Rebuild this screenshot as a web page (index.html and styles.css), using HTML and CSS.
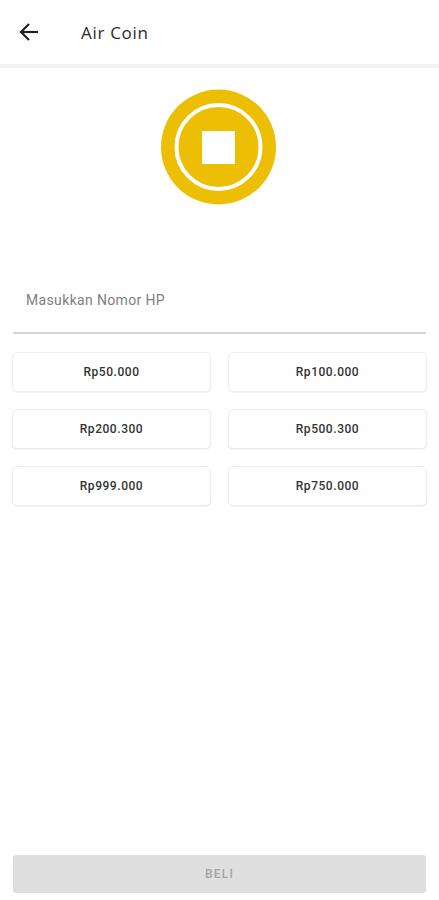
FILE: index.html
```html
<!DOCTYPE html>
<html lang="en">
<head>
  <meta charset="UTF-8">
  <title>Air Coin</title>
  <link rel="stylesheet" href="styles.css">
</head>
<body>
  <div class="header">
    <svg class="back" width="20" height="20" viewBox="0 0 20 20" fill="none" stroke="#222" stroke-width="2.2">
      <path d="M19 10H2"/>
      <path d="M10 2L2 10l8 8"/>
    </svg>
    <h1>Air Coin</h1>
  </div>

  <div class="logo">
    <svg width="115" height="116" viewBox="0 0 115 116">
      <circle cx="57.5" cy="58" r="57.5" fill="#ecbf04"/>
      <circle cx="57.5" cy="58" r="42" fill="none" stroke="#fff" stroke-width="4"/>
      <rect x="41" y="42" width="33" height="33" fill="#fff"/>
    </svg>
  </div>

  <div class="phone-field">Masukkan Nomor HP</div>

  <div class="amounts">
    <button>Rp50.000</button>
    <button>Rp100.000</button>
    <button>Rp200.300</button>
    <button>Rp500.300</button>
    <button>Rp999.000</button>
    <button>Rp750.000</button>
  </div>

  <button class="buy">BELI</button>
</body>
</html>
```

FILE: styles.css
```css
html, body {
  height: 100%;
}

body {
  margin: 0;
  box-sizing: border-box;
  height: 900px;
  padding-bottom: 7px;
  display: flex;
  flex-direction: column;
  background-color: #fff;
  font-family: Roboto, sans-serif;
  overflow: hidden;
}

.header {
  height: 64px;
  display: flex;
  align-items: center;
  padding-left: 19px;
  border-bottom: 4px solid #f3f3f3;
}

.back {
  flex: none;
}

.header h1 {
  margin: 0 0 0 42px;
  font-family: "Open Sans", sans-serif;
  font-size: 17px;
  font-weight: 400;
  letter-spacing: 0.7px;
  color: #2a2a2a;
}

.logo {
  display: flex;
  justify-content: center;
  padding: 21px 2px 0 0;
}

.logo svg {
  display: block;
}

.phone-field {
  margin: 84px 13px 0;
  height: 43px;
  padding-left: 13px;
  border-bottom: 2px solid #d4d4d4;
  font-size: 14px;
  line-height: 22px;
  letter-spacing: 0.35px;
  color: #808080;
}

.amounts {
  display: grid;
  grid-template-columns: 199px 199px;
  grid-auto-rows: 40px;
  column-gap: 17px;
  row-gap: 17px;
  margin: 18px 12px 0;
}

.amounts button {
  background-color: #fff;
  border: 1px solid #ececec;
  border-radius: 5px;
  box-shadow: 0 1px 1px rgba(0, 0, 0, 0.05);
  font-family: Roboto, sans-serif;
  font-size: 12px;
  font-weight: 500;
  letter-spacing: 0.55px;
  color: #333;
  padding: 0;
}

.buy {
  margin: auto 13px 0;
  height: 38px;
  padding: 0;
  background-color: #dfdfdf;
  border: none;
  border-radius: 3px;
  font-family: Roboto, sans-serif;
  font-size: 12px;
  font-weight: 500;
  letter-spacing: 1.2px;
  color: #a4a4a4;
}
```
